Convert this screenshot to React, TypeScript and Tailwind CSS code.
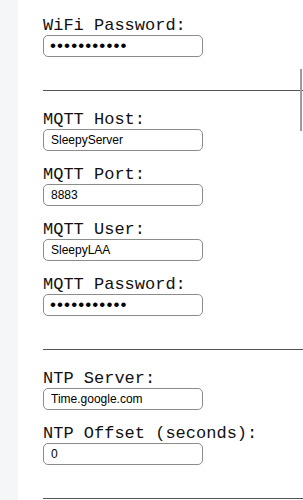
const Field = ({ label, value, password }: { label: string; value: string; password?: boolean }) => (
  <div className="flex flex-col">
    <label className="font-['Liberation_Mono','Courier_New',monospace] text-[17px] leading-[17px] text-[#111] whitespace-nowrap">
      {label}
    </label>
    {password ? (
      // masked value drawn as bullets so the dots match the browser's native size
      <input
        type="text"
        defaultValue={'\u2022'.repeat(value.length)}
        readOnly
        className="mt-[1px] h-[22px] w-[160px] rounded-[5px] border border-[#8c8c8c] bg-white px-[6px] font-['Liberation_Sans',Arial,sans-serif] text-[17px] leading-none tracking-[1.1px] text-black outline-none"
      />
    ) : (
      <input
        type="text"
        defaultValue={value}
        readOnly
        className="mt-[1px] h-[22px] w-[160px] rounded-[5px] border border-[#8c8c8c] bg-white px-[7px] font-['Liberation_Sans',Arial,sans-serif] text-[12px] text-black outline-none"
      />
    )}
  </div>
)

const Divider = () => <div className="h-0 w-[300px] border-t-[1.5px] border-[#555]" />

export default function App() {
  return (
    <div className="relative flex h-[500px] w-[303px] overflow-hidden bg-white">
      <div className="w-[18px] shrink-0 bg-[#f5f6f8]" />

      <div className="flex flex-1 flex-col pl-[25px] pt-[17px]">
        <div className="flex flex-col gap-[15px]">
          <Field label="WiFi Password:" value="hunter2pass" password />
        </div>
        <div className="mt-[33px]">
          <Divider />
        </div>

        <div className="mt-[20px] flex flex-col gap-[15px]">
          <Field label="MQTT Host:" value="SleepyServer" />
          <Field label="MQTT Port:" value="8883" />
          <Field label="MQTT User:" value="SleepyLAA" />
          <Field label="MQTT Password:" value="mqttpass123" password />
        </div>
        <div className="mt-[33px]">
          <Divider />
        </div>

        <div className="mt-[20px] flex flex-col gap-[15px]">
          <Field label="NTP Server:" value="Time.google.com" />
          <Field label="NTP Offset (seconds):" value="0" />
        </div>
        <div className="mt-[33px]">
          <Divider />
        </div>
      </div>

      {/* scrollbar-ish mark on the right edge */}
      <div className="absolute left-[300px] top-[69px] h-[62px] w-[2px] bg-[#9b9b9b]" />
    </div>
  )
}
